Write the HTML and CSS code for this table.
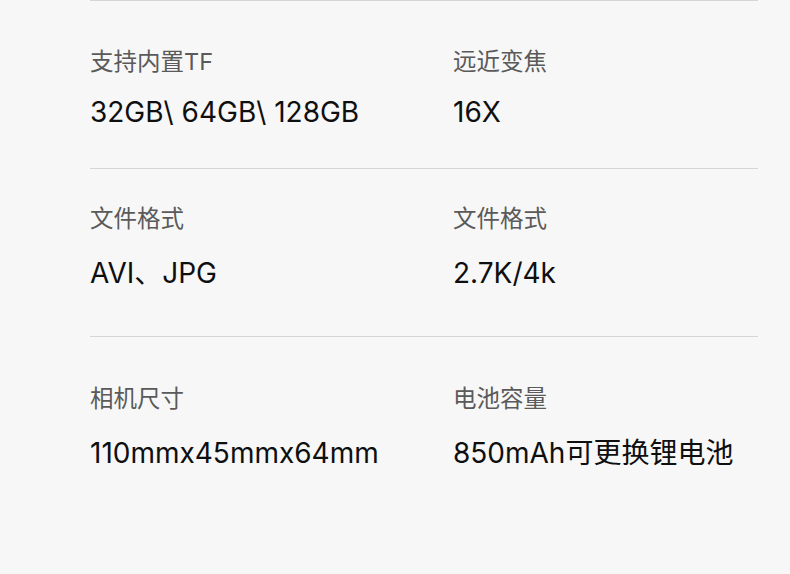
FILE: index.html
```html
<!DOCTYPE html>
<html>
<head>
    <title>相机参数</title>
    <meta charset="UTF-8">
    <link rel="stylesheet" href="styles.css">
</head>
<body>
    <div class="specs">
        <div class="row row-first">
            <div class="item">
                <div class="label">支持内置TF</div>
                <div class="value">32GB\ 64GB\ 128GB</div>
            </div>
            <div class="item">
                <div class="label">远近变焦</div>
                <div class="value">16X</div>
            </div>
        </div>
        <div class="row row-second">
            <div class="item">
                <div class="label">文件格式</div>
                <div class="value">AVI、JPG</div>
            </div>
            <div class="item">
                <div class="label">文件格式</div>
                <div class="value">2.7K/4k</div>
            </div>
        </div>
        <div class="row row-last">
            <div class="item">
                <div class="label">相机尺寸</div>
                <div class="value">110mmx45mmx64mm</div>
            </div>
            <div class="item">
                <div class="label">电池容量</div>
                <div class="value">850mAh可更换锂电池</div>
            </div>
        </div>
    </div>
</body>
</html>
```

FILE: styles.css
```css
html, body {
    background-color: #f7f7f7;
}
body {
    font-family: Inter, "Noto Sans CJK SC", sans-serif;
    margin: 0;
    padding: 0 32px 0 90px;
}
.specs {
    width: 668px;
}
.row {
    display: grid;
    grid-template-columns: 363px 1fr;
    border-top: 1px solid #d6d6d6;
    height: 167px;
}
.row-last {
    height: 237px;
}
.label {
    color: #5a5a5a;
    font-size: 23.5px;
    line-height: 30px;
}
.value {
    color: #0f0f0f;
    font-size: 28px;
    line-height: 36px;
    margin-top: 17px;
}
.row-first .item {
    padding-top: 46px;
}
.row-second .item {
    padding-top: 35px;
}
.row-last .item {
    padding-top: 47px;
}
.row-second .value,
.row-last .value {
    margin-top: 21px;
}
```
